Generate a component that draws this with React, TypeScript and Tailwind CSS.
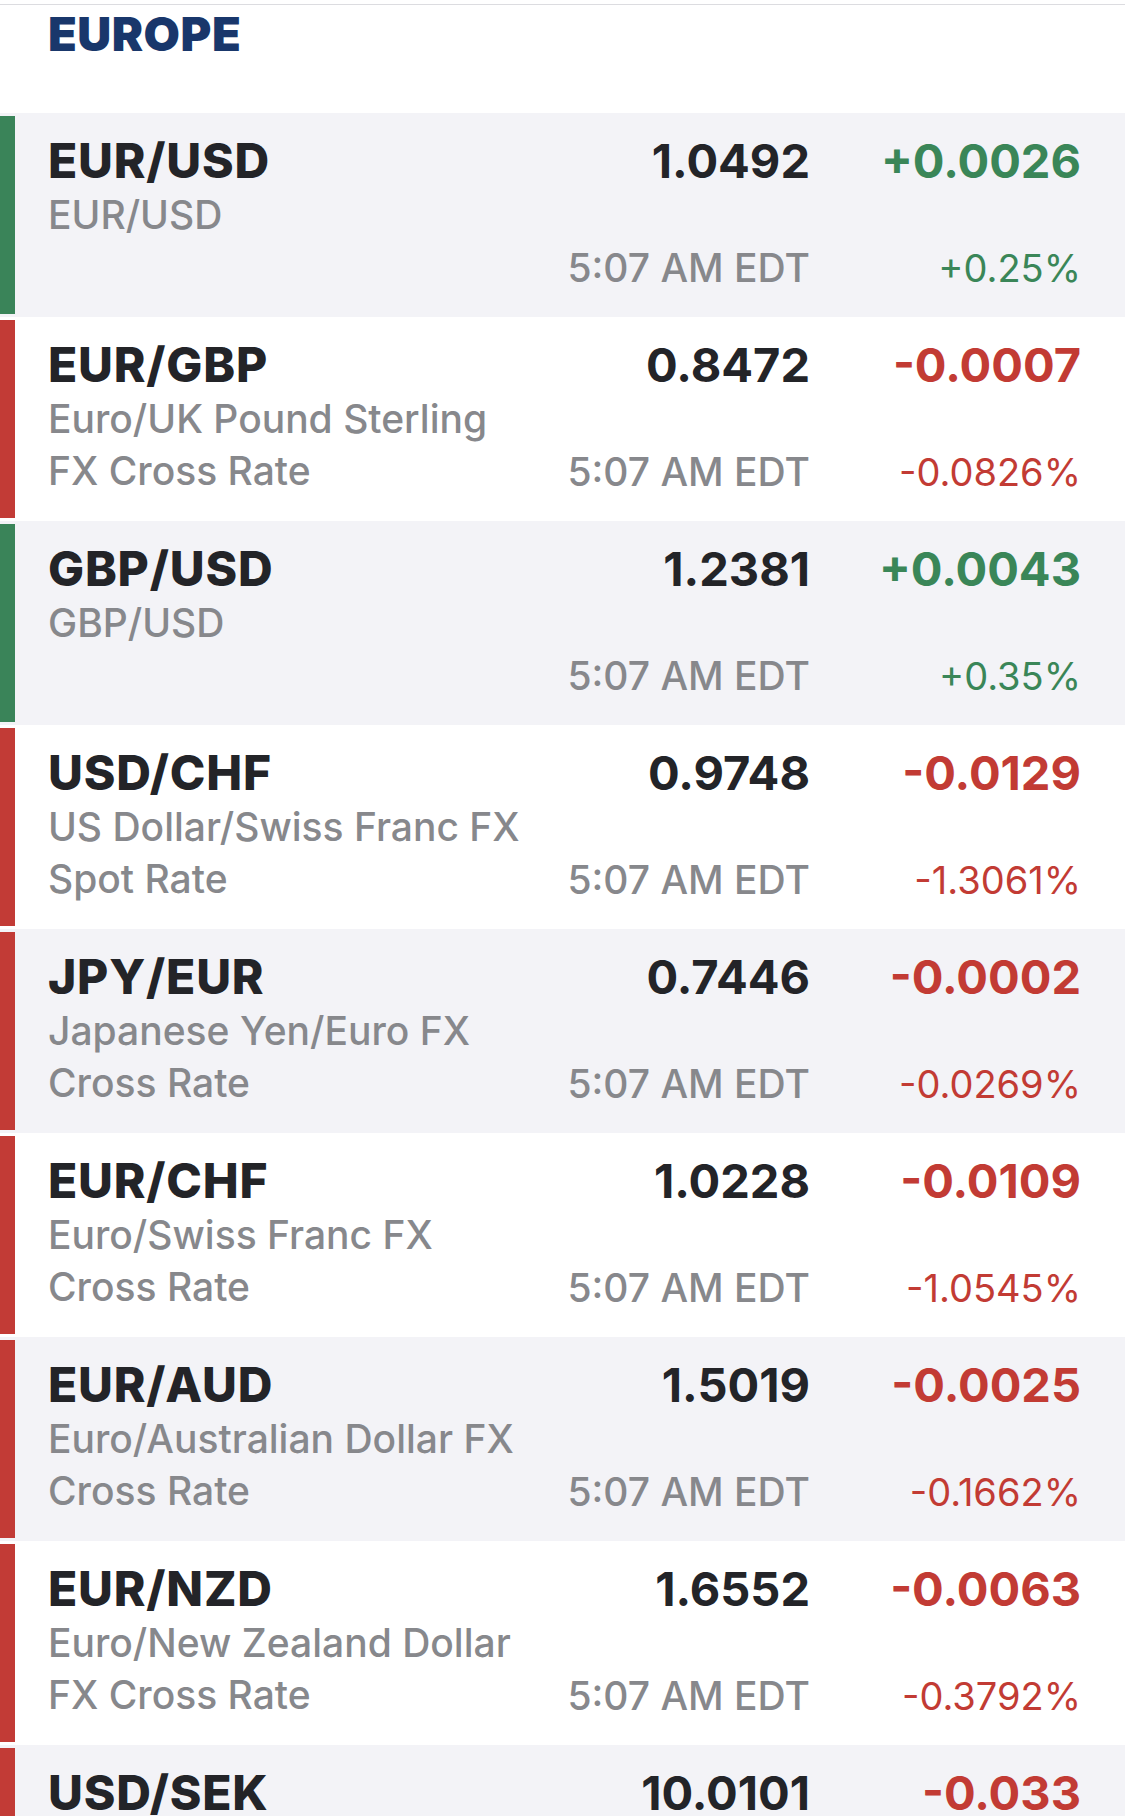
import React from "react";

type Quote = {
  symbol: string;
  name: string[];
  price: string;
  change: string;
  pct: string;
  up: boolean;
};

const quotes: Quote[] = [
  { symbol: "EUR/USD", name: ["EUR/USD"], price: "1.0492", change: "+0.0026", pct: "+0.25%", up: true },
  { symbol: "EUR/GBP", name: ["Euro/UK Pound Sterling", "FX Cross Rate"], price: "0.8472", change: "-0.0007", pct: "-0.0826%", up: false },
  { symbol: "GBP/USD", name: ["GBP/USD"], price: "1.2381", change: "+0.0043", pct: "+0.35%", up: true },
  { symbol: "USD/CHF", name: ["US Dollar/Swiss Franc FX", "Spot Rate"], price: "0.9748", change: "-0.0129", pct: "-1.3061%", up: false },
  { symbol: "JPY/EUR", name: ["Japanese Yen/Euro FX", "Cross Rate"], price: "0.7446", change: "-0.0002", pct: "-0.0269%", up: false },
  { symbol: "EUR/CHF", name: ["Euro/Swiss Franc FX", "Cross Rate"], price: "1.0228", change: "-0.0109", pct: "-1.0545%", up: false },
  { symbol: "EUR/AUD", name: ["Euro/Australian Dollar FX", "Cross Rate"], price: "1.5019", change: "-0.0025", pct: "-0.1662%", up: false },
  { symbol: "EUR/NZD", name: ["Euro/New Zealand Dollar", "FX Cross Rate"], price: "1.6552", change: "-0.0063", pct: "-0.3792%", up: false },
  { symbol: "USD/SEK", name: ["US Dollar/Swedish Krona", "FX Spot Rate"], price: "10.0101", change: "-0.033", pct: "-0.3286%", up: false },
];

const QuoteRow = ({ q, shaded }: { q: Quote; shaded: boolean }) => {
  const color = q.up ? "text-[#3a8658]" : "text-[#c23b34]";
  return (
    <div className={`flex h-[204px] ${shaded ? "bg-[#f3f3f7]" : "bg-white"}`}>
      <div className={`w-[15px] shrink-0 my-[3px] ${q.up ? "bg-[#3a8459]" : "bg-[#c23b36]"}`} />
      <div className="flex flex-1 min-w-0 pl-[33px] pr-[44px] pt-[22px] pb-[23px]">
        <div className="flex-1 min-w-0 flex flex-col">
          <span className="text-[48px] leading-[52px] font-extrabold text-[#232428] tracking-[0.8px]">{q.symbol}</span>
          <div className="mt-[2px] flex flex-col">
            {q.name.map((line) => (
              <span key={line} className="text-[39px] leading-[52px] font-medium text-[#87888c] whitespace-nowrap">
                {line}
              </span>
            ))}
          </div>
        </div>
        <div className="w-[260px] shrink-0 flex flex-col justify-between items-end">
          <span className="text-[47px] leading-[52px] font-bold text-[#232428]">{q.price}</span>
          <span className="text-[39px] leading-[52px] font-medium text-[#87888c] whitespace-nowrap">5:07 AM EDT</span>
        </div>
        <div className="w-[271px] shrink-0 flex flex-col justify-between items-end">
          <span className={`text-[47px] leading-[52px] font-bold ${color}`}>{q.change}</span>
          <span className={`text-[38px] leading-[52px] ${color}`}>{q.pct}</span>
        </div>
      </div>
    </div>
  );
};

const App = () => {
  return (
    <div className="w-[1125px] bg-white" style={{ fontFamily: "Inter, 'Noto Sans', sans-serif" }}>
      <div className="h-[4px] bg-white border-b border-[#dcdce0] box-content" />
      <div className="h-[108px] pl-[48px] pt-[3px]">
        <span className="text-[47px] leading-[52px] font-black text-[#19376b] tracking-[0.5px]">EUROPE</span>
      </div>
      <div className="flex flex-col">
        {quotes.map((q, i) => (
          <QuoteRow key={q.symbol} q={q} shaded={i % 2 === 0} />
        ))}
      </div>
    </div>
  );
};

export default App;
